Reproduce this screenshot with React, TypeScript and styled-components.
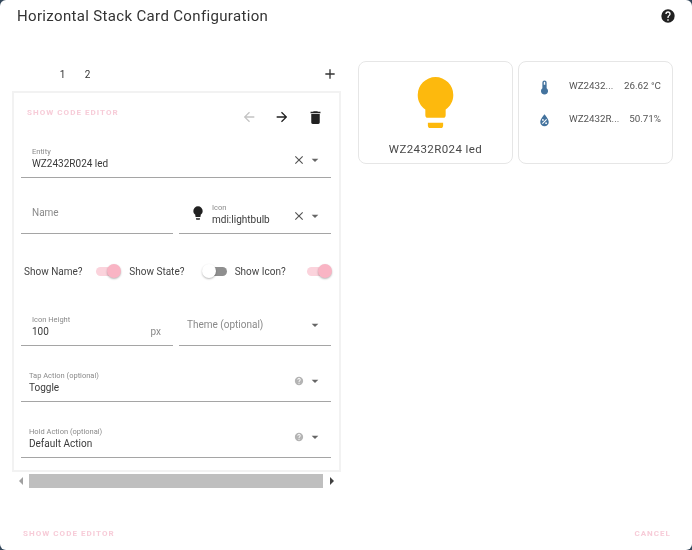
import React from "react";
import styled, { createGlobalStyle } from "styled-components";

const P = {
  bulb: "M12,2A7,7 0 0,0 5,9C5,11.38 6.19,13.47 8,14.74V17A1,1 0 0,0 9,18H15A1,1 0 0,0 16,17V14.74C17.81,13.47 19,11.38 19,9A7,7 0 0,0 12,2M9,21A1,1 0 0,0 10,22H14A1,1 0 0,0 15,21V20H9V21Z",
  help: "M15.07,11.25L14.17,12.17C13.45,12.89 13,13.5 13,15H11V14.5C11,13.39 11.45,12.39 12.17,11.67L13.41,10.41C13.78,10.05 14,9.55 14,9C14,7.89 13.1,7 12,7A2,2 0 0,0 10,9H8A4,4 0 0,1 12,5A4,4 0 0,1 16,9C16,9.88 15.64,10.67 15.07,11.25M13,19H11V17H13M12,2A10,10 0 0,0 2,12A10,10 0 0,0 12,22A10,10 0 0,0 22,12C22,6.47 17.5,2 12,2Z",
  del: "M19,4H15.5L14.5,3H9.5L8.5,4H5V6H19M6,19A2,2 0 0,0 8,21H16A2,2 0 0,0 18,19V7H6V19Z",
  right: "M4,11V13H16L10.5,18.5L11.92,19.92L19.84,12L11.92,4.08L10.5,5.5L16,11H4Z",
  left: "M20,11V13H8L13.5,18.5L12.08,19.92L4.16,12L12.08,4.08L13.5,5.5L8,11H20Z",
  plus: "M19,13H13V19H11V13H5V11H11V5H13V11H19V13Z",
  close: "M19,6.41L17.59,5L12,10.59L6.41,5L5,6.41L10.59,12L5,17.59L6.41,19L12,13.41L17.59,19L19,17.59L13.41,12L19,6.41Z",
  down: "M7,10L12,15L17,10H7Z",
  therm: "M15 13V5A3 3 0 0 0 9 5V13A5 5 0 1 0 15 13M12 4A1 1 0 0 1 13 5V8H11V5A1 1 0 0 1 12 4Z",
  water: "M12,3.25C12,3.25 6,10 6,14C6,17.32 8.69,20 12,20A6,6 0 0,0 18,14C18,10 12,3.25 12,3.25M14.47,9.97L15.53,11.03L9.53,17.03L8.47,15.97M9.75,10A1.25,1.25 0 0,1 11,11.25A1.25,1.25 0 0,1 9.75,12.5A1.25,1.25 0 0,1 8.5,11.25A1.25,1.25 0 0,1 9.75,10M14.25,14.5A1.25,1.25 0 0,1 15.5,15.75A1.25,1.25 0 0,1 14.25,17A1.25,1.25 0 0,1 13,15.75A1.25,1.25 0 0,1 14.25,14.5Z",
};

const Global = createGlobalStyle`
  html, body { margin: 0; padding: 0; background: #33475b; }
  body { font-family: Roboto, "Liberation Sans", sans-serif; }
  * { box-sizing: border-box; }
`;

const Svg = styled.svg<{ $size: number; $color: string }>`
  width: ${(p) => p.$size}px;
  height: ${(p) => p.$size}px;
  flex: none;
  display: block;
  fill: ${(p) => p.$color};
`;

const Icon = ({ d, size = 16, color = "#212121" }: { d: string; size?: number; color?: string }) => (
  <Svg viewBox="0 0 24 24" $size={size} $color={color}>
    <path d={d} />
  </Svg>
);

const Dialog = styled.div`
  width: 692px;
  height: 550px;
  background: #fff;
  border-radius: 6px;
  overflow: hidden;
  display: flex;
  flex-direction: column;
  filter: blur(0.35px);
`;

const Header = styled.header`
  height: 61px;
  flex: none;
  padding: 6px 17px 0;
  display: flex;
  justify-content: space-between;
`;

const Title = styled.h2`
  margin: 0;
  font-size: 15px;
  line-height: 20px;
  font-weight: 400;
  letter-spacing: 0.34px;
  color: #333;
`;

const HelpSlot = styled.div`
  margin: 2px -1px 0 0;
`;

const Body = styled.main`
  flex: 1;
  display: flex;
  padding-left: 12px;
  gap: 17px;
  align-items: flex-start;
`;

const EditorColumn = styled.section`
  width: 329px;
  flex: none;
`;

const Tabs = styled.div`
  height: 30px;
  display: flex;
  align-items: center;
  padding: 0 3px 4px 38px;
`;

const Tab = styled.span`
  width: 25px;
  text-align: center;
  font-size: 10px;
  color: #333;
`;

const TabPlus = styled.div`
  margin-left: auto;
`;

const EditorCard = styled.div`
  height: 381px;
  border: 2px solid #f2f2f2;
  padding: 0 8px 0 7px;
`;

const CardBar = styled.div`
  height: 29px;
  display: flex;
  align-items: flex-start;
  justify-content: space-between;
  margin-left: 6px;
`;

const PinkText = styled.span`
  font-size: 8px;
  line-height: 10px;
  font-weight: 700;
  letter-spacing: 1.05px;
  color: #f7ccd8;
  text-transform: uppercase;
`;

const BarLabel = styled(PinkText)`
  margin-top: 15px;
`;

const BarActions = styled.div`
  display: flex;
  margin-top: 16px;
  margin-right: -1px;
`;

const BarButton = styled.div`
  width: 33px;
  display: flex;
  justify-content: center;
  &:last-child {
    margin-left: 1px;
  }
`;

const Row = styled.div`
  display: grid;
  grid-template-columns: 1fr 1fr;
  gap: 6px;
`;

const FieldBox = styled.div<{ $inset?: number }>`
  min-width: 0;
  height: 56px;
  display: flex;
  align-items: flex-end;
  padding: 0 8px 6px ${(p) => p.$inset ?? 11}px;
  border-bottom: 1px solid #a5a5a5;
`;

const FieldText = styled.div`
  flex: 1;
  min-width: 0;
`;

const FieldLabel = styled.div`
  font-size: 7.5px;
  line-height: 10px;
  color: #8a8a8a;
`;

const FieldValue = styled.div`
  font-size: 10px;
  line-height: 14px;
  color: #3a3a3a;
  white-space: nowrap;
`;

const Placeholder = styled.div`
  font-size: 10px;
  line-height: 14px;
  color: #8a8a8a;
  margin-bottom: 7px;
`;

const Unit = styled.span`
  font-size: 10px;
  line-height: 14px;
  color: #8a8a8a;
  margin-right: 4px;
`;

const Trailing = styled.div<{ $lift: number; $gap?: number }>`
  display: flex;
  align-items: center;
  gap: ${(p) => p.$gap ?? 1}px;
  margin-bottom: ${(p) => p.$lift}px;
`;

const LeadIcon = styled.div`
  margin: 0 6px 6px 0;
  align-self: flex-end;
`;

const ToggleRow = styled.div`
  height: 56px;
  display: flex;
  gap: 8px;
  margin: 0 -1px 0 3px;
  padding-top: 18px;
  align-items: center;
`;

const ToggleGroup = styled.div`
  flex: 1;
  display: flex;
  align-items: center;
  justify-content: space-between;
`;

const ToggleLabel = styled.span`
  font-size: 10px;
  color: #444;
  white-space: nowrap;
`;

const Track = styled.div<{ $on: boolean }>`
  position: relative;
  width: 25px;
  height: 14px;
  display: flex;
  align-items: center;
  &::before {
    content: "";
    width: ${(p) => (p.$on ? 20 : 19)}px;
    height: 9px;
    margin-left: ${(p) => (p.$on ? 0 : 6)}px;
    border-radius: 5px;
    background: ${(p) => (p.$on ? "#fbd3dc" : "#8f8f8f")};
  }
  &::after {
    content: "";
    position: absolute;
    top: 0;
    left: ${(p) => (p.$on ? 11 : 0)}px;
    width: 14px;
    height: 14px;
    border-radius: 50%;
    background: ${(p) => (p.$on ? "#f9b4c4" : "#fff")};
    box-shadow: 0 1px 2px rgba(0, 0, 0, 0.28);
  }
`;

const ScrollBar = styled.div`
  height: 15px;
  margin-top: 1px;
  display: flex;
  align-items: center;
  padding: 0 4px;
`;

const ScrollThumb = styled.div`
  flex: 1;
  height: 14px;
  margin: 0 4px 0 3px;
  background: #bfbfbf;
`;

const Arrow = styled.span<{ $dir: "l" | "r" }>`
  width: 0;
  height: 0;
  border-top: 4px solid transparent;
  border-bottom: 4px solid transparent;
  ${(p) => (p.$dir === "l" ? "border-right: 4px solid #a0a0a0;" : "border-left: 4px solid #404040;")}
  margin: 0 3px;
`;

const Preview = styled.aside`
  display: grid;
  grid-template-columns: repeat(2, minmax(0, 1fr));
  gap: 5px;
  width: 315px;
  flex: none;
`;

const PreviewCard = styled.div`
  min-width: 0;
  height: 103px;
  border: 1px solid #e6e6e6;
  border-radius: 8px;
`;

const ButtonCard = styled(PreviewCard)`
  display: flex;
  flex-direction: column;
  align-items: center;
  padding-top: 10px;
`;

const ButtonName = styled.div`
  font-size: 11.5px;
  line-height: 14px;
  letter-spacing: 0.4px;
  color: #484848;
  margin-top: 9px;
  white-space: nowrap;
`;

const EntitiesCard = styled(PreviewCard)`
  padding: 7px 11px 0 17px;
`;

const EntityRow = styled.div`
  height: 33px;
  display: flex;
  align-items: center;
  font-size: 9.8px;
  color: #555;
`;

const EntityIcon = styled.div`
  width: 33px;
  flex: none;
  margin-top: 3px;
`;

const EntityName = styled.span`
  flex: 1;
  min-width: 0;
  white-space: nowrap;
`;

const EntityValue = styled.span`
  white-space: nowrap;
`;

const Footer = styled.footer`
  flex: none;
  height: 31px;
  display: flex;
  justify-content: space-between;
  align-items: flex-start;
  padding: 10px 21px 0 23px;
`;

const Actions = () => (
  <Trailing $lift={3}>
    <Icon d={P.close} size={14} color="#555" />
    <Icon d={P.down} size={16} color="#666" />
  </Trailing>
);

const HelpActions = () => (
  <Trailing $lift={6} $gap={3}>
    <Icon d={P.help} size={10} color="#b4b4b4" />
    <Icon d={P.down} size={16} color="#666" />
  </Trailing>
);

const Toggle = ({ label, on }: { label: string; on: boolean }) => (
  <ToggleGroup>
    <ToggleLabel>{label}</ToggleLabel>
    <Track $on={on} />
  </ToggleGroup>
);

export default function App() {
  return (
    <>
      <Global />
      <Dialog>
        <Header>
          <Title>Horizontal Stack Card Configuration</Title>
          <HelpSlot>
            <Icon d={P.help} size={16} />
          </HelpSlot>
        </Header>
        <Body>
          <EditorColumn>
            <Tabs>
              <Tab>1</Tab>
              <Tab>2</Tab>
              <TabPlus>
                <Icon d={P.plus} size={16} color="#333" />
              </TabPlus>
            </Tabs>
            <EditorCard>
              <CardBar>
                <BarLabel>Show Code Editor</BarLabel>
                <BarActions>
                  <BarButton><Icon d={P.left} size={16} color="#c4c4c4" /></BarButton>
                  <BarButton><Icon d={P.right} size={16} color="#212121" /></BarButton>
                  <BarButton><Icon d={P.del} size={17} color="#212121" /></BarButton>
                </BarActions>
              </CardBar>
              <FieldBox>
                <FieldText>
                  <FieldLabel>Entity</FieldLabel>
                  <FieldValue>WZ2432R024 led</FieldValue>
                </FieldText>
                <Actions />
              </FieldBox>
              <Row>
                <FieldBox>
                  <FieldText>
                    <Placeholder>Name</Placeholder>
                  </FieldText>
                </FieldBox>
                <FieldBox>
                  <LeadIcon>
                    <Icon d={P.bulb} size={16} color="#212121" />
                  </LeadIcon>
                  <FieldText>
                    <FieldLabel>Icon</FieldLabel>
                    <FieldValue>mdi:lightbulb</FieldValue>
                  </FieldText>
                  <Actions />
                </FieldBox>
              </Row>
              <ToggleRow>
                <Toggle label="Show Name?" on />
                <Toggle label="Show State?" on={false} />
                <Toggle label="Show Icon?" on />
              </ToggleRow>
              <Row>
                <FieldBox>
                  <FieldText>
                    <FieldLabel>Icon Height</FieldLabel>
                    <FieldValue>100</FieldValue>
                  </FieldText>
                  <Unit>px</Unit>
                </FieldBox>
                <FieldBox $inset={8}>
                  <FieldText>
                    <Placeholder>Theme (optional)</Placeholder>
                  </FieldText>
                  <Trailing $lift={6}>
                    <Icon d={P.down} size={16} color="#666" />
                  </Trailing>
                </FieldBox>
              </Row>
              <FieldBox $inset={8}>
                <FieldText>
                  <FieldLabel>Tap Action (optional)</FieldLabel>
                  <FieldValue>Toggle</FieldValue>
                </FieldText>
                <HelpActions />
              </FieldBox>
              <FieldBox $inset={8}>
                <FieldText>
                  <FieldLabel>Hold Action (optional)</FieldLabel>
                  <FieldValue>Default Action</FieldValue>
                </FieldText>
                <HelpActions />
              </FieldBox>
            </EditorCard>
            <ScrollBar>
              <Arrow $dir="l" />
              <ScrollThumb />
              <Arrow $dir="r" />
            </ScrollBar>
          </EditorColumn>
          <Preview>
            <ButtonCard>
              <Icon d={P.bulb} size={61} color="#fdb90d" />
              <ButtonName>WZ2432R024 led</ButtonName>
            </ButtonCard>
            <EntitiesCard>
              <EntityRow>
                <EntityIcon><Icon d={P.therm} size={17} color="#44739e" /></EntityIcon>
                <EntityName>WZ2432...</EntityName>
                <EntityValue>26.62 °C</EntityValue>
              </EntityRow>
              <EntityRow>
                <EntityIcon><Icon d={P.water} size={17} color="#44739e" /></EntityIcon>
                <EntityName>WZ2432R...</EntityName>
                <EntityValue>50.71%</EntityValue>
              </EntityRow>
            </EntitiesCard>
          </Preview>
        </Body>
        <Footer>
          <PinkText>Show Code Editor</PinkText>
          <PinkText>Cancel</PinkText>
        </Footer>
      </Dialog>
    </>
  );
}
